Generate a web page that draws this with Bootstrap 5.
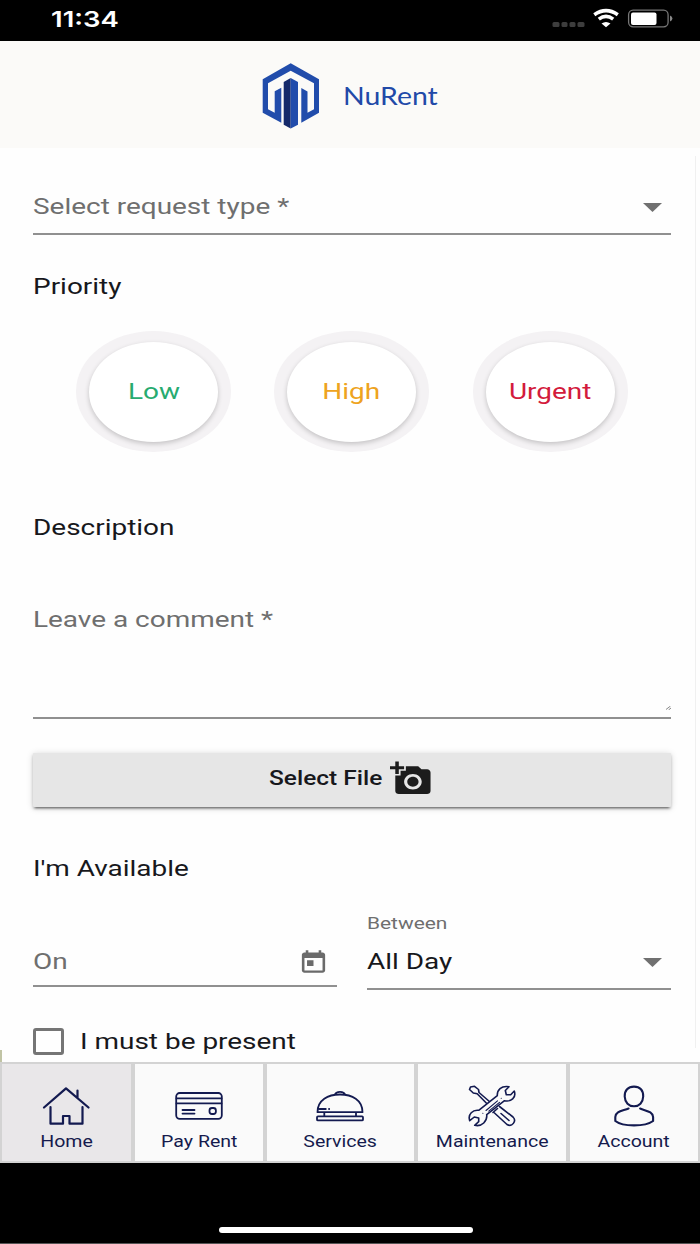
<!DOCTYPE html>
<html lang="en">
<head>
<meta charset="utf-8">
<title>NuRent</title>
<link href="https://cdn.jsdelivr.net/npm/bootstrap@5.3.0/dist/css/bootstrap.min.css" rel="stylesheet">
<style>
body{width:700px;height:1244px;overflow:hidden;background:#000;font-family:Roboto,sans-serif;font-size:22.5px;line-height:28px;color:#17181c}
svg{display:block;flex:none}
/* extended letterforms */
.ext{display:inline-block;white-space:nowrap;transform:scaleX(var(--sx,1.242));transform-origin:0 50%}
.ext-c{transform-origin:50% 50%}
.status{height:41px;padding:0 27px 0 51px;color:#fff}
.clock{font:600 22px/38px Inter,sans-serif;--sx:1.25}
.topbar{height:107px;background:#fbfaf8;padding:3px 0 0 262px;gap:23px}
.brand{font-family:Lato,sans-serif;font-size:24.5px;color:#2149a8;--sx:1.16}
.screen{height:914px;background:#fefefe;padding:44px 29px 0 33px}
.screen::before{content:"";position:absolute;left:695px;top:8px;width:1px;height:892px;background:#f0f0f0}
.screen::after{content:"";position:absolute;left:0;bottom:0;width:2px;height:12px;background:#c1c4a5}
.muted{color:#6f6f6f}
.line{border-bottom:2px solid #909090}
.f-type{height:43px;padding-right:9px}
.h-prio{margin-top:37px}
.prios{margin:31px 43.5px 0 43px}
.ring{width:155px;height:120.5px;border-radius:50%;background:#f4f2f4;padding:11px 13px 10px}
.disc{height:99.5px;border-radius:50%;background:#fff;box-shadow:0 2px 5px rgba(0,0,0,.2);padding-bottom:2px}
.low{color:#27ab70}.high{color:#eea320}.urgent{color:#d31b3c}
.h-desc{margin-top:61.5px}
.f-note{margin-top:64px;height:114px}
.grip{right:0;bottom:7px}
.pick{margin:34px 0 0 -.5px;height:54px;background:#e6e6e6;border:0;border-radius:1px;color:#17181c;padding:0 0 2px 236px;font:500 19.7px/28px Roboto,sans-serif;box-shadow:0 3px 2px -2px rgba(0,0,0,.45),0 2px 3px rgba(0,0,0,.2),0 1px 7px rgba(0,0,0,.16)}
.h-avail{margin-top:47px}
.when{gap:30px;margin-top:28px;height:80px}
.f-on{width:304px;height:77px;padding:37px 8px 0 0}
.f-btw{width:304px;height:80px}
.tiny{font-size:17px;line-height:27px;--sx:1.23}
.f-day{padding-top:10px;padding-right:9px}
.present{margin-top:37px;gap:16px}
.boxy{width:31px;height:27px;border:3px solid #757575;border-radius:3px;flex:none}
.tabs{height:101px;background:#d3d3d3;color:#151a4d}
.tab{border:2px solid #d3d3d3;background:#fafafa;padding-top:21px;font-size:16px;line-height:30px;display:flex;flex-direction:column;align-items:center;--sx:1.22}
.tab svg{fill:none;stroke:#131a50;stroke-width:1.8;stroke-linecap:round;stroke-linejoin:round;margin-left:-1px}
.tab.on{background:#e9e7e9}
.w132{width:132px}.w133{width:133px}.w151{width:151px}.w152{width:152px}
.foot{height:81px;padding-top:64px;border-bottom:1px solid #555}
.pill{width:254px;height:6px;border-radius:3px;background:#fff;margin-left:219px}
</style>
</head>
<body>
<header class="status d-flex justify-content-between">
  <span class="ext clock">11:34</span>
  <svg width="121" height="41" viewBox="552 0 121 41">
    <g fill="#3d3d3d"><rect x="552.5" y="22" width="7" height="5" rx="1.5"/><rect x="561.5" y="22" width="6" height="5" rx="1.5"/><rect x="569.5" y="22" width="6" height="5" rx="1.5"/><rect x="577.5" y="22" width="7" height="5" rx="1.5"/></g>
    <path d="M594.3 14.8Q606 6.6 617.8 14.8M598.8 19.1Q606 13.8 613.2 19.1" fill="none" stroke="#fff" stroke-width="3.6"/>
    <path d="M601.5 23.5Q606 20.5 610.5 23.5L606 27.3Z" fill="#fff"/>
    <rect x="628.6" y="10.2" width="39.5" height="16.6" rx="4.5" fill="none" stroke="#777" stroke-width="1.3"/>
    <rect x="631" y="12.5" width="25.5" height="12.5" rx="2" fill="#fff"/>
    <path d="M670 15.5q2.4.8 2.4 3t-2.4 3z" fill="#888"/>
  </svg>
</header>
<div class="topbar d-flex align-items-center">
  <svg width="58" height="66" viewBox="0 0 58 66">
    <path fill="#214cab" d="M28.7.3 57 16.2V49.7L39.3 59.7V25L45.5 28.5V49.7L52 46.3V20.3L28.7 7.7 6 20.3V46.3L12.7 49.7V28.3L19.3 24.7V59.7L.7 49.7V16.2Z"/>
    <path fill="#14296a" d="M28.7 15 21.7 19V61.7L28.7 65.6Z"/><path fill="#214cab" d="M28.7 15 36 19V61.7L28.7 65.6Z"/>
  </svg>
  <span class="ext brand">NuRent</span>
</div>
<main class="screen position-relative overflow-hidden">
  <div class="f-type line muted d-flex justify-content-between">
    <span class="ext">Select request type *</span>
    <svg width="19" height="9" viewBox="0 0 19 9" style="margin-top:11px"><path d="M0 0H19L9.5 9Z" fill="#707070"/></svg>
  </div>
  <div class="h-prio"><span class="ext">Priority</span></div>
  <div class="prios d-flex justify-content-between">
    <div class="ring"><div class="disc low d-flex align-items-center justify-content-center"><span class="ext ext-c">Low</span></div></div>
    <div class="ring"><div class="disc high d-flex align-items-center justify-content-center"><span class="ext ext-c">High</span></div></div>
    <div class="ring"><div class="disc urgent d-flex align-items-center justify-content-center"><span class="ext ext-c">Urgent</span></div></div>
  </div>
  <div class="h-desc"><span class="ext">Description</span></div>
  <div class="f-note line muted position-relative">
    <span class="ext">Leave a comment *</span>
    <svg class="grip position-absolute" width="5" height="4" viewBox="0 0 5 4"><path d="M0 3.5 4.5 0M2.5 4 5 2" stroke="#888"/></svg>
  </div>
  <button class="pick btn w-100 d-flex align-items-center text-start">
    <span class="ext" style="width:121.5px">Select File</span>
    <svg width="42.3" height="37.2" viewBox="0 0 24 24" preserveAspectRatio="none" fill="#1c1c1c"><path d="M3 4V1h2v3h3v2H5v3H3V6H0V4h3zm3 6V7h3V4h7l1.83 2H21c1.1 0 2 .9 2 2v12c0 1.1-.9 2-2 2H5c-1.1 0-2-.9-2-2V10h3zm7 9c2.76 0 5-2.24 5-5s-2.24-5-5-5-5 2.24-5 5 2.24 5 5 5zm-3.2-5c0 1.77 1.43 3.2 3.2 3.2s3.2-1.43 3.2-3.2-1.43-3.2-3.2-3.2-3.2 1.43-3.2 3.2z"/></svg>
  </button>
  <div class="h-avail"><span class="ext">I'm Available</span></div>
  <div class="when d-flex">
    <div class="f-on line muted d-flex justify-content-between">
      <span class="ext">On</span>
      <svg width="31" height="27" viewBox="0 0 24 24" preserveAspectRatio="none" fill="#6a6a6a" style="margin-top:1.5px"><path d="M19 3h-1V1h-2v2H8V1H6v2H5c-1.1 0-2 .9-2 2v14c0 1.1.9 2 2 2h14c1.1 0 2-.9 2-2V5c0-1.1-.9-2-2-2zm0 16H5V8h14v11zM7 10h5v5H7z"/></svg>
    </div>
    <div class="f-btw line">
      <div class="tiny muted"><span class="ext">Between</span></div>
      <div class="f-day d-flex justify-content-between">
        <span class="ext">All Day</span>
        <svg width="19" height="9" viewBox="0 0 19 9" style="margin-top:11px"><path d="M0 0H19L9.5 9Z" fill="#707070"/></svg>
      </div>
    </div>
  </div>
  <div class="present d-flex align-items-center">
    <span class="boxy"></span><span class="ext">I must be present</span>
  </div>
</main>
<nav class="tabs d-flex">
  <div class="tab on w133">
    <svg width="48" height="42" viewBox="0 0 48 42"><g stroke-width="2.2"><path d="M2 22.5 24 3.3 46.5 22.5M35.5 5.5V12.5M8.5 22V38.7H21V31H27.5V38.7H40.5V22"/></g></svg>
    <span class="ext ext-c">Home</span></div>
  <div class="tab w132">
    <svg width="48" height="42" viewBox="0 0 48 42"><rect x="1.2" y="8" width="45.6" height="25.8" rx="3.5"/><path d="M1.5 13.4H46.5M1.5 18.4H46.5M7.5 25H19.5M7.5 28.6H19.5"/><rect x="34.5" y="23" width="6.4" height="6" rx="2.5"/></svg>
    <span class="ext ext-c">Pay Rent</span></div>
  <div class="tab w151">
    <svg width="48" height="42" viewBox="0 0 48 42"><path d="M1.5 27.2C1.5 15 12 9.5 24 9.5S46.5 15 46.5 27.2ZM18.8 9.8C20 5.8 28 5.8 29.2 9.8M8.3 27.5V31M40 27.5V31M3.5 24H9.8M13 24H13.2"/><rect x="1" y="31.4" width="46" height="4" rx="1"/></svg>
    <span class="ext ext-c">Services</span></div>
  <div class="tab w152">
    <svg width="48" height="42" viewBox="0 0 48 42">
      <g stroke-width="1.6"><path d="M22 17 11 7.5 10.5 4.5 6.5 1.3 2.5 2 1.5 4.5 5.3 8 9.2 8.8 19 18.7M31.5 21.5 45 32C49 36 44 42.5 39 39.5L26.5 28M29.5 23.5 25 27.5M33 28.5 41 35.5"/>
      <path fill="#fafafa" d="M29.3 10.7C29 5 33 .5 41 1.7L37.3 5.5 38.3 9.7 42.7 9.7 46.3 6C48.5 13 43 17 36.5 15.7L18.7 29.6C19.5 36 14 42 6.7 40.3L10.7 36.7V33L6.3 32 1.7 35.7C-.5 29 5 24.5 10.7 25.3Z"/>
      <path d="M18 25.5 29.5 15.8M20.8 26.2 31.5 17.4M14.8 28.3h.1M33.2 13.2h.1" stroke-width="1.1"/></g></svg>
    <span class="ext ext-c">Maintenance</span></div>
  <div class="tab w132">
    <svg width="48" height="42" viewBox="0 0 48 42"><path stroke-width="2.1" d="M24 1.6C30.1 1.6 33.4 5.5 33.2 11.5S29.1 21.3 24 21.3 14.9 17.5 14.7 11.5 18.1 1.6 24 1.6ZM18.6 23.5C12.6 26 5.6 26 5.3 32V36C8.6 38.6 16.6 40.4 24 40.4S39.6 38.6 43.1 36V32C42.6 26 35.6 26 30.1 23.5"/></svg>
    <span class="ext ext-c">Account</span></div>
</nav>
<footer class="foot"><div class="pill"></div></footer>
<script src="https://cdn.jsdelivr.net/npm/bootstrap@5.3.0/dist/js/bootstrap.bundle.min.js"></script>
</body>
</html>
